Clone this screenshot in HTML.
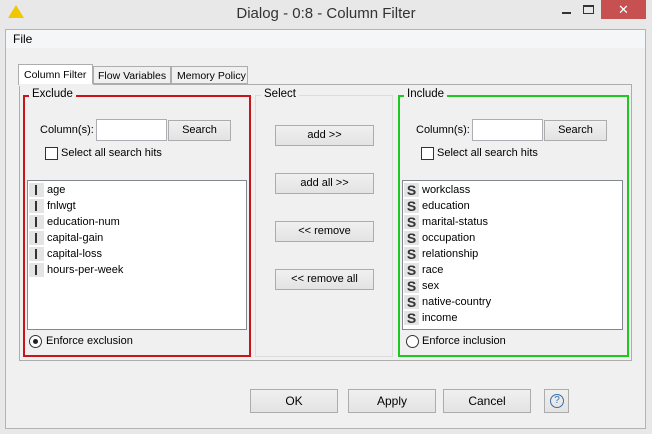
<!DOCTYPE html>
<html><head><style>
*{box-sizing:border-box;margin:0;padding:0}
body{width:652px;height:434px;background:#e8e8e8;font-family:"Liberation Sans",sans-serif;font-size:11px;color:#000;position:relative;overflow:hidden}
.a{position:absolute;white-space:nowrap}
.btn{position:absolute;background:linear-gradient(#f0f0f0,#e3e3e3);border:1px solid #acacac;text-align:center;font-size:11px;white-space:nowrap}
.inp{position:absolute;background:#fff;border:1px solid #abadb3}
.list{position:absolute;background:#fff;border:1px solid #828790}
.it{height:16px;line-height:16px;position:relative;padding-left:19px;font-size:11px}
.ic{position:absolute;left:1px;top:1px;width:15px;height:14px;background:#e4e4e4}
.ic.n:after{content:"";position:absolute;left:6px;top:2px;width:2px;height:10px;background:#333}
.ic.s{font-weight:bold;font-size:14px;line-height:14px;text-align:center;color:#333;padding:0}
.cb{position:absolute;width:13px;height:13px;border:1px solid #333;background:#fff}
.rad{position:absolute;width:13px;height:13px;border:1px solid #333;border-radius:50%;background:#fff}
</style></head><body>
<div class="a" style="left:8px;top:5px;width:0;height:0;border-left:8px solid transparent;border-right:8px solid transparent;border-bottom:13px solid #f0c800"></div>
<div class="a" style="left:0;top:5px;width:652px;text-align:center;font-size:15px;color:#333">Dialog - 0:8 - Column Filter</div>
<div class="a" style="left:562px;top:12px;width:9px;height:2px;background:#333"></div>
<div class="a" style="left:583px;top:5px;width:11px;height:9px;border:1px solid #333;border-top-width:2px"></div>
<div class="a" style="left:601px;top:0;width:45px;height:19px;background:#c75050;color:#fff;text-align:center;font-size:13px;line-height:19px">✕</div>
<div class="a" style="left:5px;top:29px;width:641px;height:400px;background:#f0f0f0;border:1px solid #b4b4b4"></div>
<div class="a" style="left:6px;top:30px;width:639px;height:18px;background:#f5f6f7"></div>
<div class="a" style="left:13px;top:32px;font-size:12px">File</div>
<!-- tabs -->
<div class="a" style="left:18px;top:64px;width:75px;height:21px;background:#fff;border:1px solid #adadad;border-bottom:none;padding:4px 0 0 5px;font-size:10.5px">Column Filter</div>
<div class="a" style="left:93px;top:66px;width:78px;height:18px;background:#f0f0f0;border:1px solid #adadad;padding:3px 0 0 4px;font-size:10.5px">Flow Variables</div>
<div class="a" style="left:171px;top:66px;width:77px;height:18px;background:#f0f0f0;border:1px solid #adadad;padding:3px 0 0 5px;font-size:10.5px">Memory Policy</div>
<div class="a" style="left:19px;top:84px;width:613px;height:277px;border:1px solid #adadad;background:#f0f0f0"></div>
<div class="a" style="left:19px;top:84px;width:74px;height:2px;background:#f0f0f0"></div>
<!-- exclude -->
<div class="a" style="left:23px;top:95px;width:228px;height:262px;border:2px solid #c8151a"></div>
<div class="a" style="left:29px;top:88px;background:#f0f0f0;padding:0 3px;font-size:11.5px">Exclude</div>
<div class="a" style="left:40px;top:124px">Column(s):</div>
<div class="inp" style="left:96px;top:119px;width:71px;height:22px"></div>
<div class="btn" style="left:168px;top:120px;width:63px;height:21px;line-height:19px">Search</div>
<div class="cb" style="left:45px;top:147px"></div>
<div class="a" style="left:61px;top:147px">Select all search hits</div>
<div class="list" style="left:27px;top:180px;width:220px;height:150px;padding-top:1px">
<div class="it"><span class="ic n"></span>age</div>
<div class="it"><span class="ic n"></span>fnlwgt</div>
<div class="it"><span class="ic n"></span>education-num</div>
<div class="it"><span class="ic n"></span>capital-gain</div>
<div class="it"><span class="ic n"></span>capital-loss</div>
<div class="it"><span class="ic n"></span>hours-per-week</div>
</div>
<div class="rad" style="left:29px;top:335px"><div style="position:absolute;left:3px;top:3px;width:5px;height:5px;border-radius:50%;background:#222"></div></div>
<div class="a" style="left:46px;top:335px">Enforce exclusion</div>
<!-- select -->
<div class="a" style="left:255px;top:95px;width:138px;height:262px;border:1px solid #dcdcdc"></div>
<div class="a" style="left:261px;top:88px;background:#f0f0f0;padding:0 3px;font-size:11.5px">Select</div>
<div class="btn" style="left:275px;top:125px;width:99px;height:21px;line-height:19px">add &gt;&gt;</div>
<div class="btn" style="left:275px;top:173px;width:99px;height:21px;line-height:19px">add all &gt;&gt;</div>
<div class="btn" style="left:275px;top:221px;width:99px;height:21px;line-height:19px">&lt;&lt; remove</div>
<div class="btn" style="left:275px;top:269px;width:99px;height:21px;line-height:19px">&lt;&lt; remove all</div>
<!-- include -->
<div class="a" style="left:398px;top:95px;width:231px;height:262px;border:2px solid #1ec81e"></div>
<div class="a" style="left:404px;top:88px;background:#f0f0f0;padding:0 3px;font-size:11.5px">Include</div>
<div class="a" style="left:416px;top:124px">Column(s):</div>
<div class="inp" style="left:472px;top:119px;width:71px;height:22px"></div>
<div class="btn" style="left:544px;top:120px;width:63px;height:21px;line-height:19px">Search</div>
<div class="cb" style="left:421px;top:147px"></div>
<div class="a" style="left:437px;top:147px">Select all search hits</div>
<div class="list" style="left:402px;top:180px;width:221px;height:150px;padding-top:1px">
<div class="it"><span class="ic s">S</span>workclass</div>
<div class="it"><span class="ic s">S</span>education</div>
<div class="it"><span class="ic s">S</span>marital-status</div>
<div class="it"><span class="ic s">S</span>occupation</div>
<div class="it"><span class="ic s">S</span>relationship</div>
<div class="it"><span class="ic s">S</span>race</div>
<div class="it"><span class="ic s">S</span>sex</div>
<div class="it"><span class="ic s">S</span>native-country</div>
<div class="it"><span class="ic s">S</span>income</div>
</div>
<div class="rad" style="left:406px;top:335px"></div>
<div class="a" style="left:422px;top:335px">Enforce inclusion</div>
<!-- bottom -->
<div class="btn" style="left:250px;top:389px;width:88px;height:24px;line-height:22px;font-size:12px">OK</div>
<div class="btn" style="left:348px;top:389px;width:88px;height:24px;line-height:22px;font-size:12px">Apply</div>
<div class="btn" style="left:443px;top:389px;width:88px;height:24px;line-height:22px;font-size:12px">Cancel</div>
<div class="btn" style="left:544px;top:389px;width:25px;height:24px"><div style="position:absolute;left:5px;top:4px;width:14px;height:14px;border:1px solid #3a6ea5;border-radius:50%;font-size:10px;line-height:12px;color:#3a6ea5">?</div></div>
</body></html>
